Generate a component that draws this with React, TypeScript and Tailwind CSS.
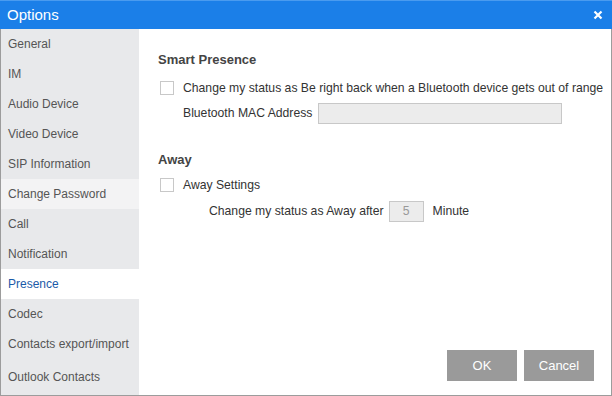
import React from "react";

const items = [
  "General",
  "IM",
  "Audio Device",
  "Video Device",
  "SIP Information",
  "Change Password",
  "Call",
  "Notification",
  "Presence",
  "Codec",
  "Contacts export/import",
];

function Checkbox() {
  return <span className="w-[14px] h-[14px] border border-[#c8c8c8] bg-white shrink-0" />;
}

export default function App() {
  return (
    <div className="w-[612px] h-[396px] flex flex-col bg-white font-['Liberation_Sans',Arial,sans-serif] text-[12px] text-[#333] border border-t-0 border-[#9c9c9c]">
      <div className="h-[29px] shrink-0 bg-[#1b7fe8] border-t border-[#4a9bef] flex items-center justify-between pl-[7px] pr-[9px] -mx-px">
        <span className="text-white text-[15px]">Options</span>
        <svg width="10" height="10" viewBox="0 0 10 10">
          <path d="M1.5 1.5 L8.5 8.5 M8.5 1.5 L1.5 8.5" stroke="white" strokeWidth="2.2" />
        </svg>
      </div>
      <div className="flex flex-1 min-h-0">
        <div className="w-[138px] bg-[#e8e9eb] flex flex-col">
          {items.map((it) => (
            <div
              key={it}
              className={
                "h-[30px] flex items-center pl-[7px] " +
                (it === "Presence"
                  ? "bg-white text-[#1a5aa8]"
                  : it === "Change Password"
                  ? "bg-[#f3f3f4] text-[#555]"
                  : "text-[#555]")
              }
            >
              {it}
            </div>
          ))}
          <div className="flex-1 flex items-center pl-[7px] text-[#555]">Outlook Contacts</div>
        </div>
        <div className="flex-1 relative pl-[19px] pt-[21px] text-[12.2px]">
          <div className="font-bold text-[13px] text-[#444]">Smart Presence</div>
          <div className="flex items-center gap-[9px] mt-[9px] pl-[2px]">
            <Checkbox />
            <span>Change my status as Be right back when a Bluetooth device gets out of range</span>
          </div>
          <div className="flex items-center mt-[6px] pl-[25px]">
            <span>Bluetooth MAC Address</span>
            <div className="ml-[6px] w-[244px] h-[21px] border border-[#c8c8c8] bg-[#ececec]" />
          </div>
          <div className="font-bold text-[13px] text-[#444] mt-[26px]">Away</div>
          <div className="flex items-center gap-[9px] mt-[7px] pl-[2px]">
            <Checkbox />
            <span>Away Settings</span>
          </div>
          <div className="flex items-center mt-[6px] pl-[51px]">
            <span>Change my status as Away after</span>
            <div className="ml-[5px] w-[35px] h-[21px] border border-[#c8c8c8] bg-[#ececec] flex items-center justify-center text-[#999]">5</div>
            <span className="ml-[9px]">Minute</span>
          </div>
          <div className="absolute right-[17px] bottom-[14px] flex gap-[7px]">
            <button className="w-[70px] h-[31px] bg-[#9a9a9a] text-white text-[13px]">OK</button>
            <button className="w-[70px] h-[31px] bg-[#9a9a9a] text-white text-[13px]">Cancel</button>
          </div>
        </div>
      </div>
    </div>
  );
}
